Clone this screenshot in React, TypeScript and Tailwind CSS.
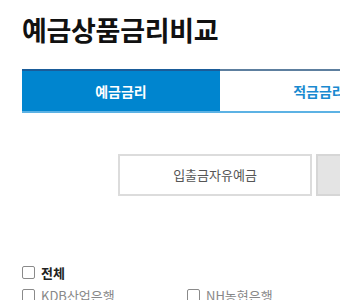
import React from "react";

const font = { fontFamily: '"Noto Sans CJK KR", "Noto Sans", sans-serif' };

const banks = ["KDB산업은행", "NH농협은행"];

const Checkbox = ({ label, strong }: { label: string; strong?: boolean }) => (
  <label className="flex items-center gap-[6px]">
    <span className="w-[13px] h-[13px] border border-[#8a8a8a] rounded-[2px] bg-white shrink-0"></span>
    <span
      className={
        strong
          ? "text-[13px] font-bold text-[#222] leading-none"
          : "text-[13px] text-[#888] leading-none"
      }
    >
      {label}
    </span>
  </label>
);

export default function App() {
  return (
    <div className="w-[340px] h-[300px] overflow-hidden bg-white" style={font}>
      <div className="pl-[22px] pt-[13px]">
        {/* Title */}
        <h1 className="text-[27px] font-bold text-[#111] leading-[34px] tracking-[-0.3px]">
          예금상품금리비교
        </h1>

        {/* Tabs */}
        <div className="mt-[22px] flex border-b-2 border-[#5cb2e4] w-[420px]">
          <div className="w-[198px] h-[42px] bg-[#0085cf] border-t-2 border-[#1a5c99] flex items-center justify-center">
            <span className="text-white text-[14px] font-bold">예금금리</span>
          </div>
          <div className="w-[198px] h-[42px] bg-white border-t-2 border-[#5d7f9f] flex items-center justify-center">
            <span className="text-[#1a8ad0] text-[14px] font-bold">적금금리</span>
          </div>
        </div>

        {/* Product buttons */}
        <div className="mt-[41px] pl-[96px] flex gap-[4px]">
          <div className="w-[194px] h-[42px] shrink-0 border-2 border-[#dcdcdc] bg-white flex items-center justify-center">
            <span className="text-[13px] text-[#555]">입출금자유예금</span>
          </div>
          <div className="w-[194px] h-[42px] shrink-0 border-2 border-[#d6d6d6] bg-[#e4e4e4]"></div>
        </div>

        {/* Bank filter */}
        <div className="mt-[70px] flex flex-col gap-[10px]">
          <Checkbox label="전체" strong />
          <div className="flex">
            <div className="w-[165px]">
              <Checkbox label={banks[0]} />
            </div>
            <Checkbox label={banks[1]} />
          </div>
        </div>
      </div>
    </div>
  );
}
